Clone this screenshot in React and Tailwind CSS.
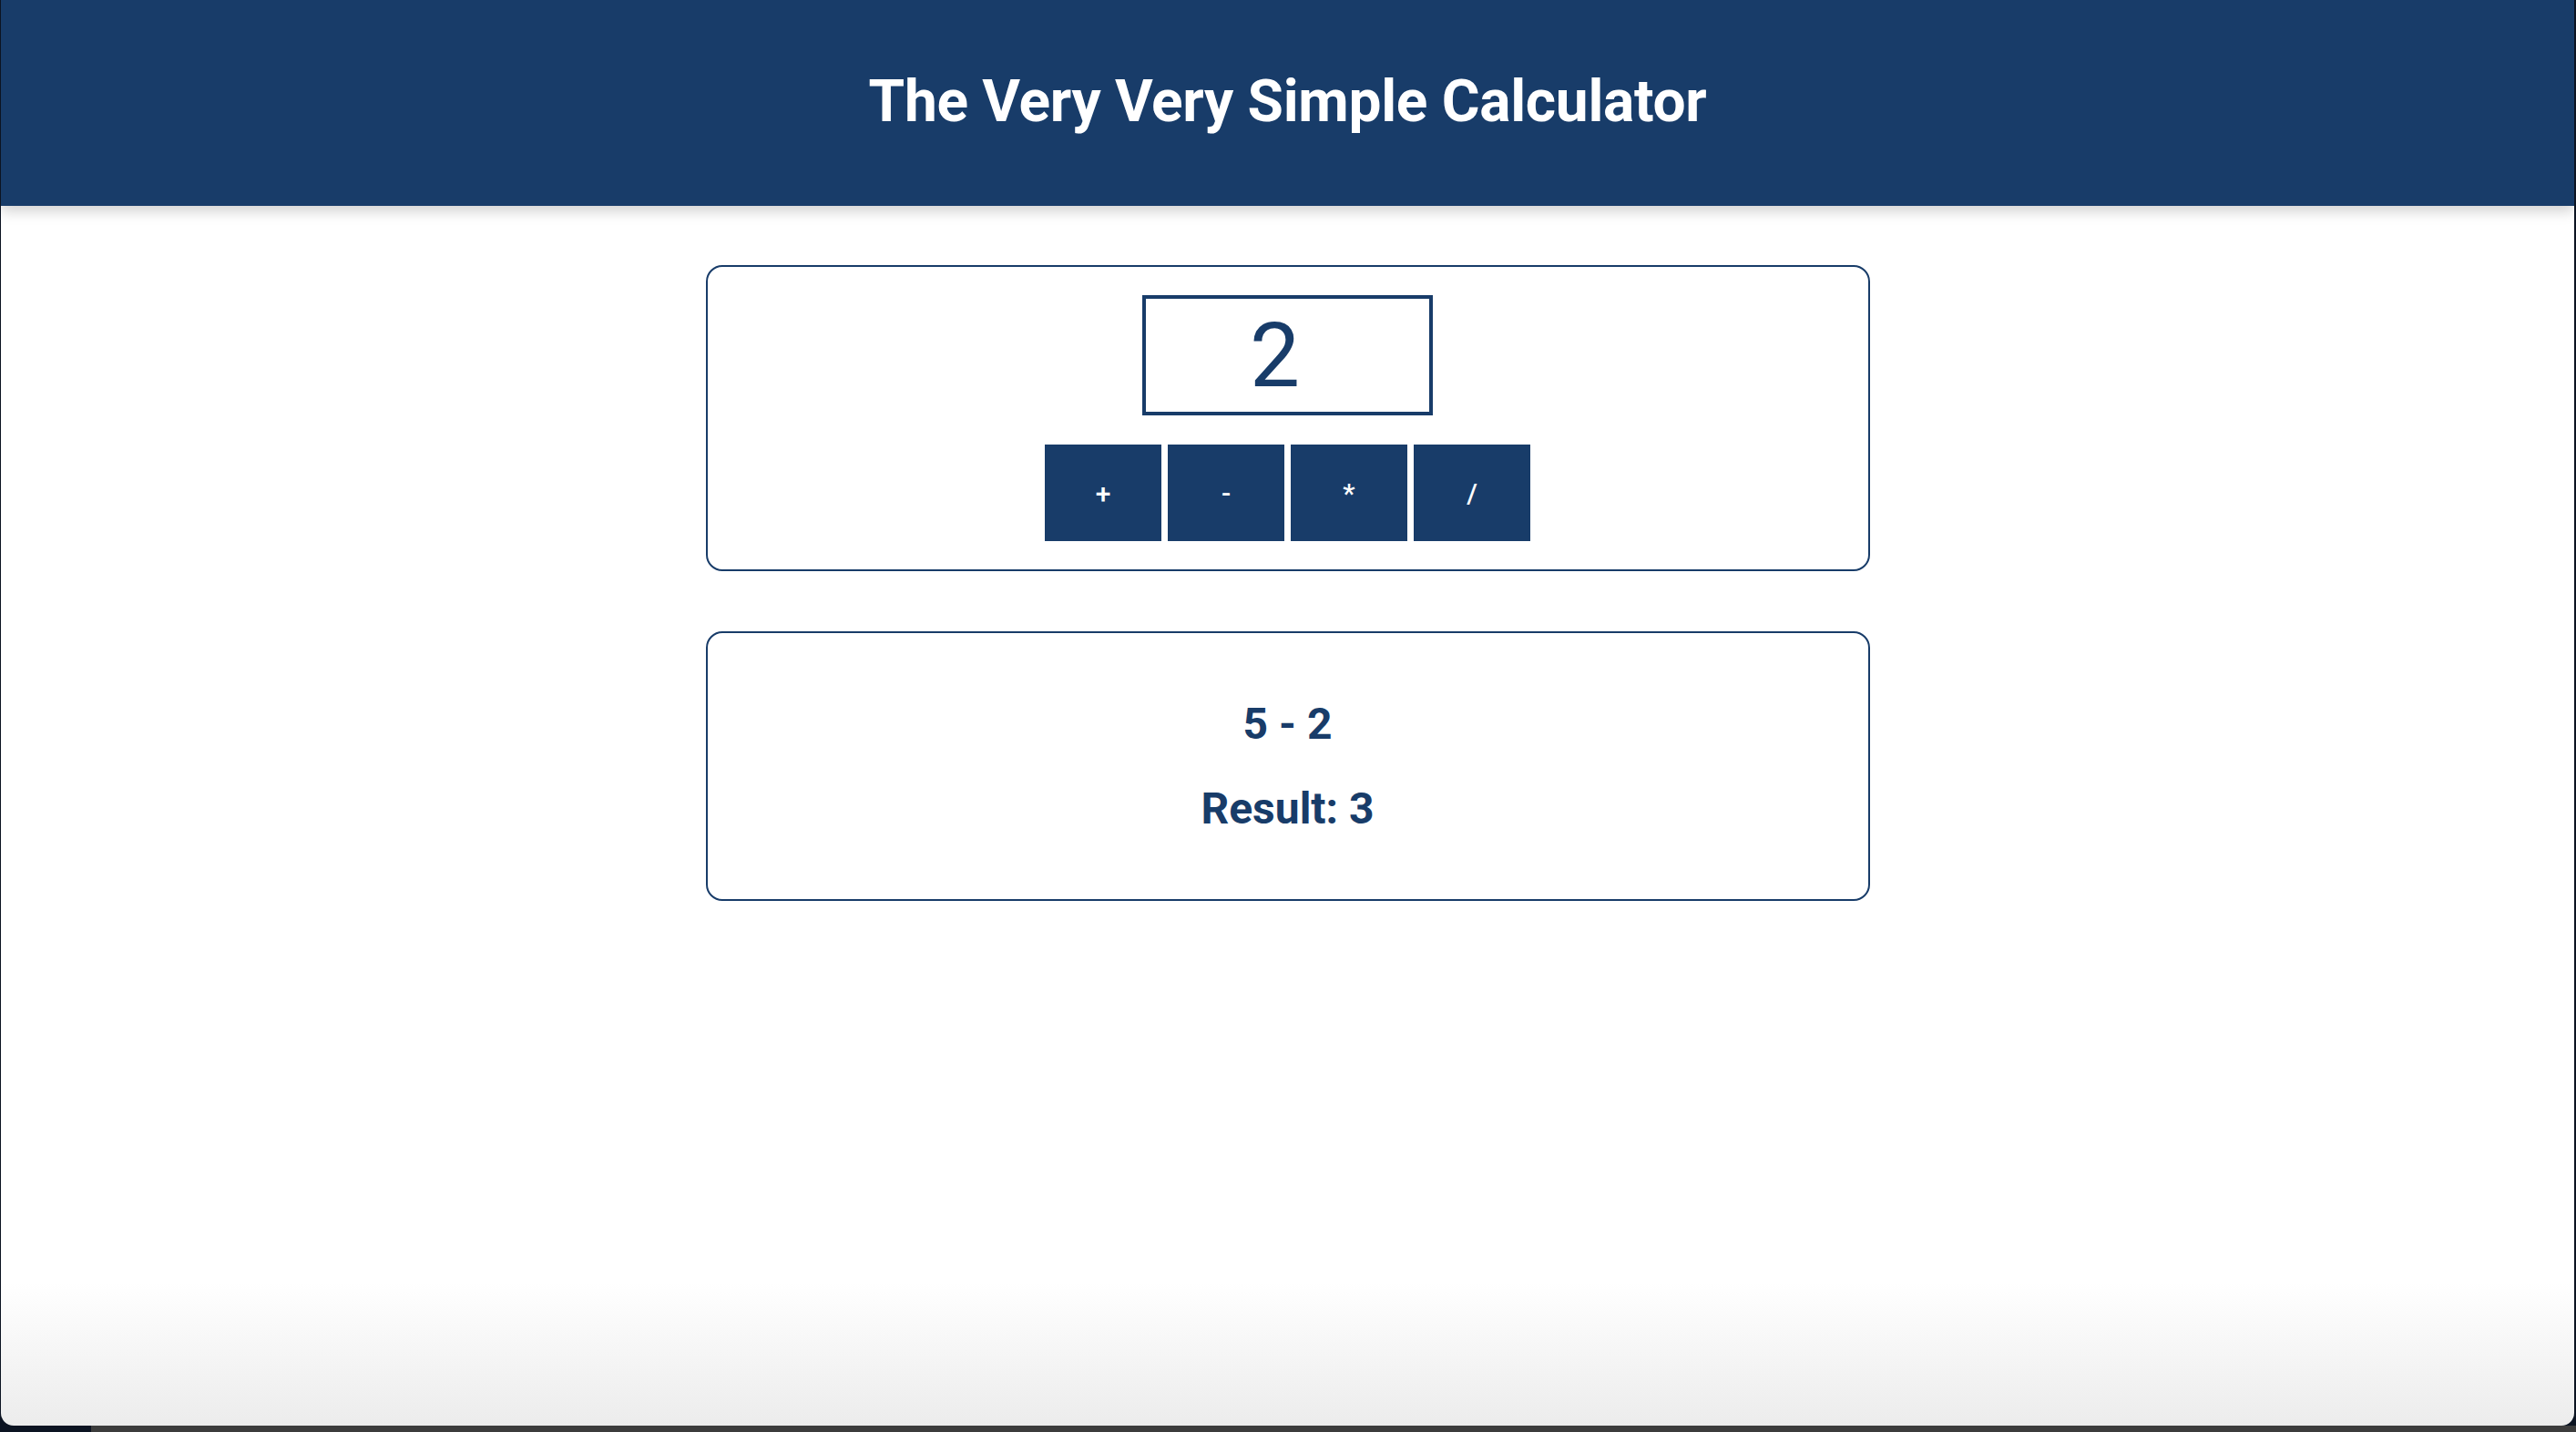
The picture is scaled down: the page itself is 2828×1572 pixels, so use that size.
import { useState } from "react";

const ops = ["+", "-", "*", "/"];

function calc(a, b, op) {
  if (op === "+") return a + b;
  if (op === "-") return a - b;
  if (op === "*") return a * b;
  if (op === "/") return b === 0 ? "∞" : a / b;
  return b;
}

export default function App() {
  const [value, setValue] = useState("2");
  const [last, setLast] = useState({ a: 5, b: 2, op: "-" });

  const handleOp = (op) => {
    const b = Number(value) || 0;
    setLast({ a: last.a, b, op });
  };

  return (
    <div className="h-screen flex flex-col bg-[#0c1422] font-['Roboto',sans-serif]">
      <div className="flex-1 flex flex-col ml-[1px] mr-[2px] rounded-b-[14px] overflow-hidden bg-gradient-to-b from-white from-[90%] to-[#ececec]">
        <header className="h-[226px] shrink-0 flex items-center justify-center bg-[#183c69] shadow-[0_6px_14px_rgba(0,0,0,0.18)]">
          <h1 className="text-[64px] font-bold text-white leading-none tracking-[-0.3px] -mt-[2px]">
            The Very Very Simple Calculator
          </h1>
        </header>

        <main className="flex flex-col items-center gap-[66px] pt-[65px]">
          <section className="w-[1278px] rounded-[18px] border-2 border-[#183c69] pt-[31px] pb-[31px] flex flex-col items-center gap-[32px]">
            <input
              type="text"
              value={value}
              onChange={(e) => setValue(e.target.value)}
              className="w-[319px] h-[132px] border-4 border-[#183c69] pr-[28px] text-center text-[98px] leading-none text-[#183c69] outline-none"
            />
            <div className="flex gap-[7px]">
              {ops.map((op) => (
                <button
                  key={op}
                  onClick={() => handleOp(op)}
                  className="w-[128px] h-[106px] bg-[#183c69] text-white text-[30px] font-medium"
                >
                  {op}
                </button>
              ))}
            </div>
          </section>

          <section className="w-[1278px] h-[296px] rounded-[18px] border-2 border-[#183c69] flex flex-col items-center justify-center gap-[37px] text-[#183c69] font-bold text-[48px] leading-[56px]">
            <p>
              {last.a} {last.op} {last.b}
            </p>
            <p>Result: {calc(last.a, last.b, last.op)}</p>
          </section>
        </main>
      </div>
      <div className="h-[7px] shrink-0 ml-[100px] bg-[#3c3c3c]" />
    </div>
  );
}
